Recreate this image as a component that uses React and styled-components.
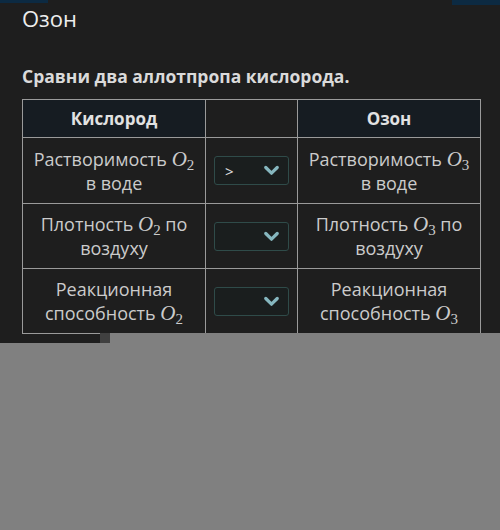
import React from "react";
import styled, { createGlobalStyle } from "styled-components";

const GlobalStyle = createGlobalStyle`
  html, body { margin: 0; padding: 0; background: #1e1e1e; }
  * { box-sizing: border-box; }
`;

const Page = styled.div`
  position: relative;
  width: 500px;
  height: 530px;
  overflow: hidden;
  background: #1e1e1e;
  font-family: "Open Sans", "Noto Sans", sans-serif;
  color: #cfcfcf;
`;

const TopStrip = styled.div`
  display: flex;
  justify-content: space-between;
  height: 3px;
`;

const StripPiece = styled.div`
  width: 48px;
  height: ${(p) => p.h}px;
  background: #0c2a42;
`;

const Content = styled.div`
  padding: 0 21px 0 22px;
`;

const Title = styled.h1`
  margin: 0;
  font-size: 22px;
  line-height: 30px;
  font-weight: 400;
  color: #ededed;
`;

const Question = styled.p`
  margin: 31px 0 11px;
  font-size: 17.5px;
  line-height: 24px;
  font-weight: 700;
  color: #dadada;
`;

const Table = styled.table`
  width: 458px;
  border-collapse: collapse;
  table-layout: fixed;
`;

const HeadCell = styled.th`
  height: 38px;
  padding: 0 4px;
  border: 1px solid #9a9a9a;
  background: ${(p) => (p.$empty ? "#1e1e1e" : "#161c22")};
  color: #e2e2e2;
  font-size: 17px;
  font-weight: 700;
  text-align: center;
`;

const Cell = styled.td`
  height: ${(p) => p.$h}px;
  padding: 0 4px;
  border: 1px solid #9a9a9a;
  font-size: 18px;
  line-height: 24px;
  text-align: center;
  vertical-align: middle;
  white-space: nowrap;
  color: #cbcbcb;
`;

const Formula = styled.span`
  font-family: "Liberation Serif", "Times New Roman", serif;
  font-size: 21px;
  white-space: nowrap;
  i { font-style: italic; }
  sub {
    font-size: 15px;
    vertical-align: -4px;
    line-height: 0;
  }
`;

const Select = styled.div`
  display: flex;
  align-items: center;
  justify-content: space-between;
  width: 75px;
  height: 29px;
  margin-left: 4px;
  padding: 0 9px 0 10px;
  border: 1px solid #2f4b49;
  border-radius: 3px;
  background: #1a1e1e;
  color: #e0e0e0;
  font-size: 15px;
`;

const Overlay = styled.div`
  position: absolute;
  top: 333px;
  left: 0;
  right: 0;
  bottom: 0;
  background: #808080;
  clip-path: polygon(100px 0, 100% 0, 100% 100%, 0 100%, 0 10px, 100px 10px);
`;

const Grip = styled.div`
  position: absolute;
  top: 333px;
  left: 100px;
  width: 10px;
  height: 10px;
  background: #404040;
`;

const Chevron = () => (
  <svg width="15" height="11" viewBox="0 0 15 11">
    <path d="M1.8 2.5 L7.5 8.2 L13.2 2.5" fill="none" stroke="#86b7bf" strokeWidth="3.2" strokeLinecap="round" strokeLinejoin="round" />
  </svg>
);

const O = ({ n }) => (
  <Formula><i>O</i><sub>{n}</sub></Formula>
);

const rows = [
  { h: 66, value: ">", left: <>Растворимость <O n={2} /><br />в воде</>, right: <>Растворимость <O n={3} /><br />в воде</> },
  { h: 65, value: "", left: <>Плотность <O n={2} /> по<br />воздуху</>, right: <>Плотность <O n={3} /> по<br />воздуху</> },
  { h: 65, value: "", left: <>Реакционная<br />способность <O n={2} /></>, right: <>Реакционная<br />способность <O n={3} /></> },
];

export default function App() {
  return (
    <>
      <GlobalStyle />
      <Page>
        <TopStrip>
          <StripPiece h={3} />
          <StripPiece h={5} />
        </TopStrip>
        <Content>
          <Title>Озон</Title>
          <Question>Сравни два аллотпропа кислорода.</Question>
          <Table>
            <colgroup>
              <col style={{ width: 183 }} />
              <col style={{ width: 92 }} />
              <col style={{ width: 183 }} />
            </colgroup>
            <thead>
              <tr>
                <HeadCell>Кислород</HeadCell>
                <HeadCell $empty />
                <HeadCell>Озон</HeadCell>
              </tr>
            </thead>
            <tbody>
              {rows.map((r, i) => (
                <tr key={i}>
                  <Cell $h={r.h}>{r.left}</Cell>
                  <Cell $h={r.h}>
                    <Select>
                      <span>{r.value}</span>
                      <Chevron />
                    </Select>
                  </Cell>
                  <Cell $h={r.h}>{r.right}</Cell>
                </tr>
              ))}
            </tbody>
          </Table>
        </Content>
        <Overlay />
        <Grip />
      </Page>
    </>
  );
}
